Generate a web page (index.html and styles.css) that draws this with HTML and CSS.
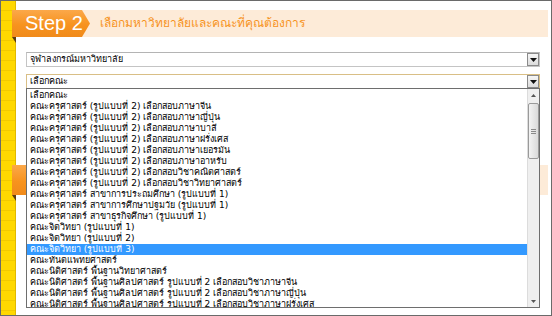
FILE: index.html
```html
<!DOCTYPE html>
<html>
<head>
<meta charset="utf-8">
<link rel="stylesheet" href="styles.css">
</head>
<body>
<div class="frame">
  <div class="rail"></div>
  <div class="main">
    <div class="step">
      <div class="badge">Step 2</div>
      <div class="bar">เลือกมหาวิทยาลัยและคณะที่คุณต้องการ</div>
    </div>
    <div class="select first">
      <span class="value">จุฬาลงกรณ์มหาวิทยาลัย</span>
      <span class="btn"><svg width="7" height="4" viewBox="0 0 7 4"><path d="M0 0H7L3.5 4Z" fill="#111"/></svg></span>
    </div>
    <div class="select active">
      <span class="value">เลือกคณะ</span>
      <span class="btn"><svg width="7" height="4" viewBox="0 0 7 4"><path d="M0 0H7L3.5 4Z" fill="#111"/></svg></span>
    </div>
    <div class="step step3">
      <div class="badge"></div>
      <div class="bar"></div>
    </div>

    <div class="dropdown">
      <ul class="options">
        <li>เลือกคณะ</li>
        <li>คณะครุศาสตร์ (รูปแบบที่ 2) เลือกสอบภาษาจีน</li>
        <li>คณะครุศาสตร์ (รูปแบบที่ 2) เลือกสอบภาษาญี่ปุ่น</li>
        <li>คณะครุศาสตร์ (รูปแบบที่ 2) เลือกสอบภาษาบาลี</li>
        <li>คณะครุศาสตร์ (รูปแบบที่ 2) เลือกสอบภาษาฝรั่งเศส</li>
        <li>คณะครุศาสตร์ (รูปแบบที่ 2) เลือกสอบภาษาเยอรมัน</li>
        <li>คณะครุศาสตร์ (รูปแบบที่ 2) เลือกสอบภาษาอาหรับ</li>
        <li>คณะครุศาสตร์ (รูปแบบที่ 2) เลือกสอบวิชาคณิตศาสตร์</li>
        <li>คณะครุศาสตร์ (รูปแบบที่ 2) เลือกสอบวิชาวิทยาศาสตร์</li>
        <li>คณะครุศาสตร์ สาขาการประถมศึกษา (รูปแบบที่ 1)</li>
        <li>คณะครุศาสตร์ สาขาการศึกษาปฐมวัย (รูปแบบที่ 1)</li>
        <li>คณะครุศาสตร์ สาขาธุรกิจศึกษา (รูปแบบที่ 1)</li>
        <li>คณะจิตวิทยา (รูปแบบที่ 1)</li>
        <li>คณะจิตวิทยา (รูปแบบที่ 2)</li>
        <li class="selected">คณะจิตวิทยา (รูปแบบที่ 3)</li>
        <li>คณะทันตแพทยศาสตร์</li>
        <li>คณะนิติศาสตร์ พื้นฐานวิทยาศาสตร์</li>
        <li>คณะนิติศาสตร์ พื้นฐานศิลปศาสตร์ รูปแบบที่ 2 เลือกสอบวิชาภาษาจีน</li>
        <li>คณะนิติศาสตร์ พื้นฐานศิลปศาสตร์ รูปแบบที่ 2 เลือกสอบวิชาภาษาญี่ปุ่น</li>
        <li>คณะนิติศาสตร์ พื้นฐานศิลปศาสตร์ รูปแบบที่ 2 เลือกสอบวิชาภาษาฝรั่งเศส</li>
      </ul>
      <div class="scrollbar">
        <span class="arrow up"><svg width="5" height="3" viewBox="0 0 5 3"><path d="M0 3H5L2.5 0Z" fill="#555"/></svg></span>
        <span class="thumb"><span class="grip"></span></span>
        <span class="track"></span>
        <span class="arrow down"><svg width="5" height="3" viewBox="0 0 5 3"><path d="M0 0H5L2.5 3Z" fill="#555"/></svg></span>
      </div>
    </div>
  </div>
</div>
</body>
</html>
```

FILE: styles.css
```css
* { box-sizing: border-box; }
html, body { margin: 0; padding: 0; }
body {
  width: 552px;
  height: 316px;
  overflow: hidden;
  background: #fff;
  font-family: Tahoma, "DejaVu Sans", "Liberation Sans", sans-serif;
}
.frame {
  width: 552px;
  height: 316px;
  border: 1px solid #6a6a6a;
  display: flex;
  overflow: hidden;
}
.rail {
  width: 15px;
  flex: none;
  background-color: #ffd800;
  background-image: repeating-linear-gradient(to bottom, transparent 0, transparent 9px, #f2c900 9px, #f2c900 10px);
  border-right: 1px solid #e0b800;
}
.main {
  flex: 1;
  position: relative;
  min-width: 0;
}
.step {
  position: relative;
  display: flex;
  align-items: stretch;
  margin: 9px 3px 0 -4px;
  height: 27px;
}
.badge {
  position: relative;
  width: 78px;
  flex: none;
  color: #fff;
  font-family: "Liberation Sans", Arial, sans-serif;
  font-size: 20px;
  line-height: 27px;
  padding-left: 13px;
  background: linear-gradient(to bottom, #fba84a 0%, #f7931e 55%, #f08a1a 100%);
  clip-path: polygon(0 0, 70px 0, 78px 50%, 70px 100%, 0 100%);
  z-index: 1;
}
.step::after {
  content: "";
  position: absolute;
  left: 0;
  top: 27px;
  border-right: 4px solid #5b3d12;
  border-bottom: 6px solid transparent;
}
.bar {
  flex: 1;
  margin-left: -8px;
  padding-left: 18px;
  background: #fdebd8;
  color: #f7931e;
  font-size: 12px;
  line-height: 27px;
  white-space: nowrap;
  overflow: hidden;
}
.select {
  display: flex;
  align-items: center;
  height: 15px;
  margin: 0 11px 0 10px;
  border: 1px solid #c4c4c4;
  border-top-color: #b4b4b4;
  background: #fff;
  font-size: 9px;
  color: #000;
}
.select.first { margin-top: 15px; }
.select.active { margin-top: 7px; border-color: #d9bf86; border-bottom-color: #a08a5e; }
.select .value { flex: 1; padding-left: 3px; line-height: 13px; white-space: nowrap; }
.select .btn {
  width: 12px;
  height: 13px;
  flex: none;
  border: 1px solid #8a8a8a;
  background: linear-gradient(to bottom, #f6f6f6, #dcdcdc);
  display: flex;
  align-items: center;
  justify-content: center;
}
.step3 { margin-top: 76px; height: 30px; }
.step3::after { top: 30px; }

.dropdown {
  position: absolute;
  left: 10px;
  top: 87px;
  width: 514px;
  height: 220px;
  border: 1px solid #6e6e6e;
  background: #fff;
  display: flex;
  z-index: 5;
}
.options {
  list-style: none;
  margin: 0;
  padding: 1px 0 0 0;
  flex: 1;
  overflow: hidden;
  font-size: 9px;
  color: #000;
}
.options li {
  height: 11px;
  line-height: 11px;
  padding-left: 3px;
  white-space: nowrap;
}
.options li.selected {
  background: #3399ff;
  color: #fff;
}
.scrollbar {
  width: 12px;
  flex: none;
  background: #efefef;
  border-left: 1px solid #dcdcdc;
  display: flex;
  flex-direction: column;
}
.scrollbar .arrow {
  height: 12px;
  flex: none;
  display: flex;
  align-items: center;
  justify-content: center;
}
.scrollbar .thumb {
  height: 56px;
  flex: none;
  margin-top: 2px;
  border: 1px solid #9a9a9a;
  border-radius: 2px;
  background: linear-gradient(to right, #f3f3f3, #dadada);
  display: flex;
  align-items: center;
  justify-content: center;
}
.scrollbar .grip {
  width: 5px;
  height: 5px;
  background: repeating-linear-gradient(to bottom, #8a8a8a 0, #8a8a8a 1px, transparent 1px, transparent 2px);
}
.scrollbar .track { flex: 1; }
```
